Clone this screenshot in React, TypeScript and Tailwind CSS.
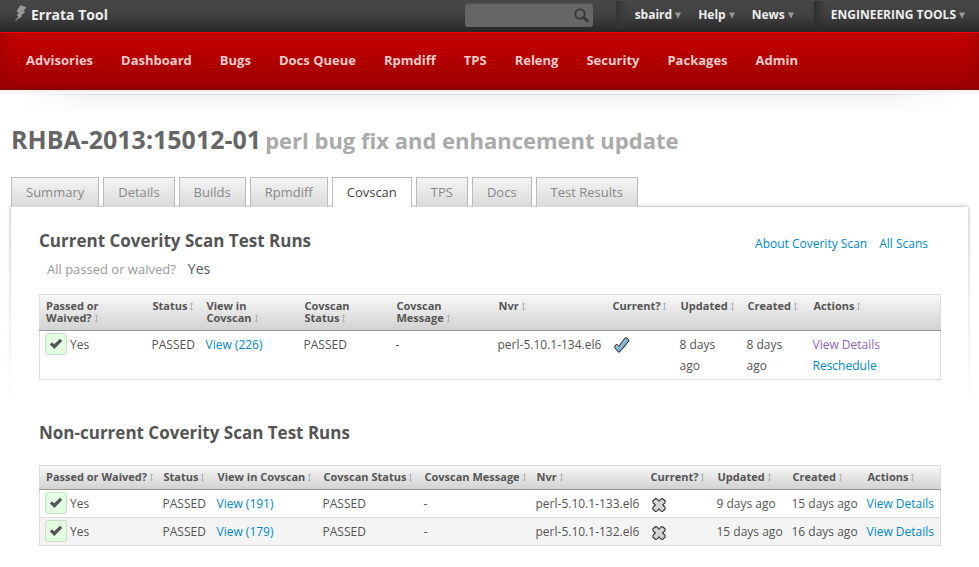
import type { ReactNode } from "react";

const navItems = ["Advisories", "Dashboard", "Bugs", "Docs Queue", "Rpmdiff", "TPS", "Releng", "Security", "Packages", "Admin"];
const tabs = ["Summary", "Details", "Builds", "Rpmdiff", "Covscan", "TPS", "Docs", "Test Results"];

function BoltIcon() {
  return (
    <svg width="13" height="17" viewBox="0 0 13 17" className="-mt-1 shrink-0" aria-hidden="true">
      <path d="M6.5 0 L12.4 2.2 L9.4 6 L11.4 6.9 L7.2 10.2 L8.6 11 L0.4 16.6 L4.4 11.4 L2.6 10.6 L4.8 7.6 L2.4 6.6 Z" fill="#999" />
    </svg>
  );
}

function SearchIcon() {
  return (
    <svg width="15" height="15" viewBox="0 0 15 15" aria-hidden="true">
      <circle cx="6" cy="6" r="4.7" fill="none" stroke="#363636" strokeWidth="1.8" />
      <path d="M9.5 9.5 L13.2 12.8" stroke="#363636" strokeWidth="2.6" strokeLinecap="round" />
    </svg>
  );
}

function SortIcon() {
  return (
    <svg width="5" height="9" viewBox="0 0 5 9" className="ml-[2px] inline-block align-[-1px]" aria-hidden="true">
      <path d="M2.5 1 V8 M1 2.5 L2.5 0.8 L4 2.5 M1 6.5 L2.5 8.2 L4 6.5" fill="none" stroke="#b4b4b4" />
    </svg>
  );
}

function PassedBadge() {
  return (
    <span className="-mt-px inline-flex h-[22px] w-[22px] shrink-0 items-center justify-center rounded-[3px] border border-[#ccdccc] bg-[#e2ffe2]">
      <svg width="14" height="12" viewBox="0 0 14 12" aria-hidden="true">
        <path d="M0.8 6.4 L3 4.2 L5.2 6.2 L11 0.8 L13.2 3 L5.4 11 Z" fill="#555" />
      </svg>
    </span>
  );
}

function CurrentIcon() {
  return (
    <svg width="16" height="16" viewBox="0 0 16 16" className="ml-[2px] mt-[3px] block" role="img" aria-label="Current">
      <defs>
        <linearGradient id="tick" x1="0" y1="0" x2="1" y2="1">
          <stop offset="0" stopColor="#d4e8f5" />
          <stop offset="1" stopColor="#3f83b5" />
        </linearGradient>
      </defs>
      <path d="M0.7 10.6 L1.2 8.6 L2.6 7 L4.8 9.4 L10.8 1.2 L12.2 0.7 L14.8 2.6 V4 L6.8 13.8 L4.6 15.3 Z" fill="url(#tick)" stroke="#1a1a1a" strokeLinejoin="round" />
    </svg>
  );
}

function NotCurrentIcon() {
  return (
    <svg width="14" height="14" viewBox="0 0 14 14" className="ml-[2px] mt-[5px] block" role="img" aria-label="Not current">
      <path
        d="M3.4 0.6 L5.2 1 L7 3.1 L8.8 1 L10.6 0.6 L13.2 3 L12.9 4.8 L10.6 7 L12.9 9.2 L13.2 11 L10.6 13.4 L8.8 13 L7 10.9 L5.2 13 L3.4 13.4 L0.8 11 L1.1 9.2 L3.4 7 L1.1 4.8 L0.8 3 Z"
        fill="#d4d4d4"
        stroke="#333"
        strokeWidth="1.1"
        strokeLinejoin="round"
      />
    </svg>
  );
}

function MenuButton({ children }: { children: ReactNode }) {
  return (
    <button type="button" className="flex items-center gap-[3px] whitespace-nowrap text-xs font-bold text-[#eee]">
      {children}
      <svg width="6" height="7" viewBox="0 0 6 7" aria-hidden="true">
        <path d="M0 0.5 H6 L3 6.5 Z" fill="#999" />
      </svg>
    </button>
  );
}

function TextLink({ children, visited = false }: { children: ReactNode; visited?: boolean }) {
  return (
    <a href="#" className={visited ? "text-[#8f63c9]" : "text-[#0088cc]"}>
      {children}
    </a>
  );
}

type Run = {
  view: string;
  nvr: string;
  current: boolean;
  updated: string;
  created: string;
  actions: ReactNode;
};

const headers = [
  ["Passed or", "Waived?"],
  ["Status"],
  ["View in", "Covscan"],
  ["Covscan", "Status"],
  ["Covscan", "Message"],
  ["Nvr"],
  ["Current?"],
  ["Updated"],
  ["Created"],
  ["Actions"],
];

const currentColumns = ["w-[107px]", "w-[54px]", "w-[98px]", "w-[92px]", "w-[102px]", "w-[114px]", "w-[68px]", "w-[67px]", "w-[66px]", "w-[133px]"];
const otherColumns = ["w-[118px]", "w-[54px]", "w-[106px]", "w-[101px]", "w-[112px]", "w-[114px]", "w-[67px]", "w-[75px]", "w-[75px]", "w-[79px]"];

const currentRuns: Run[] = [
  {
    view: "View (226)",
    nvr: "perl-5.10.1-134.el6",
    current: true,
    updated: "8 days ago",
    created: "8 days ago",
    actions: (
      <>
        <TextLink visited>View Details</TextLink>
        <br />
        <TextLink>Reschedule</TextLink>
      </>
    ),
  },
];

const otherRuns: Run[] = [
  { view: "View (191)", nvr: "perl-5.10.1-133.el6", current: false, updated: "9 days ago", created: "15 days ago", actions: <TextLink>View Details</TextLink> },
  { view: "View (179)", nvr: "perl-5.10.1-132.el6", current: false, updated: "15 days ago", created: "16 days ago", actions: <TextLink>View Details</TextLink> },
];

function RunsTable({ runs, columns, stacked = false }: { runs: Run[]; columns: string[]; stacked?: boolean }) {
  const cell = "py-[3px] pl-[5px] whitespace-nowrap";
  const dateCell = stacked ? "py-[3px] pl-[5px] pr-[6px]" : cell;
  return (
    <table className="w-full table-fixed border-collapse border border-[#ddd] text-left">
      <colgroup>
        {columns.map((width, i) => (
          <col key={i} className={width} />
        ))}
      </colgroup>
      <thead>
        <tr className="border-b border-[#999] bg-linear-to-b from-[#f8f8f8] to-[#d2d2d2] align-top">
          {headers.map((lines) => (
            <th key={lines.join(" ")} scope="col" className="pt-[5px] pb-[6px] pl-[6px] text-[11px] leading-3 font-bold whitespace-nowrap text-[#555]">
              {stacked && lines.length > 1 ? (
                <>
                  {lines[0]}
                  <br />
                  {lines[1]}
                </>
              ) : (
                lines.join(" ")
              )}
              <SortIcon />
            </th>
          ))}
        </tr>
      </thead>
      <tbody>
        {runs.map((run) => (
          <tr key={run.nvr} className="border-b border-[#ddd] align-top text-xs leading-[21px] text-[#555] even:bg-[#f4f4f4]">
            <td className={cell}>
              <span className="flex items-start gap-[3px]">
                <PassedBadge />
                Yes
              </span>
            </td>
            <td className={cell}>PASSED</td>
            <td className={cell}>
              <TextLink>{run.view}</TextLink>
            </td>
            <td className={cell}>PASSED</td>
            <td className={cell}>-</td>
            <td className={cell}>{run.nvr}</td>
            <td className={cell}>{run.current ? <CurrentIcon /> : <NotCurrentIcon />}</td>
            <td className={dateCell}>{run.updated}</td>
            <td className={dateCell}>{run.created}</td>
            <td className={cell}>{run.actions}</td>
          </tr>
        ))}
      </tbody>
    </table>
  );
}

export default function App() {
  return (
    <div className="min-h-screen bg-white font-['Open_Sans','Noto_Sans',sans-serif] text-[#555]">
      <header>
        <div className="flex h-8 items-center bg-linear-to-b from-[#484848] via-[#404040] to-[#272727] pr-[14px] pb-[2px] pl-[14px]">
          <a href="#" className="flex items-center gap-1 text-sm font-bold whitespace-nowrap text-[#eee]">
            <BoltIcon />
            Errata Tool
          </a>
          <div className="ml-auto flex h-full items-center">
            <form role="search" className="mr-[23px] flex h-6 w-32 items-center rounded-[3px] bg-[#666] pr-1 shadow-[inset_0_1px_1px_#505050]">
              <input type="search" aria-label="Search" className="w-full min-w-0 bg-transparent px-2 text-xs text-white outline-none" />
              <button type="submit" aria-label="Search">
                <SearchIcon />
              </button>
            </form>
            <div className="flex h-7 items-center gap-[17px] bg-linear-to-r from-[#343434] to-transparent to-[6%] pr-[20px] pl-[19px]">
              <MenuButton>sbaird</MenuButton>
              <MenuButton>Help</MenuButton>
              <MenuButton>News</MenuButton>
            </div>
            <div className="flex h-7 items-center bg-linear-to-r from-[#2e2e2e] to-transparent to-[8%] pl-[17px]">
              <MenuButton>ENGINEERING TOOLS</MenuButton>
            </div>
          </div>
        </div>
        <nav
          aria-label="Main"
          className="flex h-[58px] items-center gap-7 border-t border-b-2 border-t-[#f60000] border-b-[#8a0000] bg-linear-to-b from-[#c80000] to-[#9c0000] px-[26px] shadow-[inset_12px_0_20px_-12px_#980000,inset_-12px_0_20px_-12px_#980000]"
        >
          {navItems.map((item) => (
            <a key={item} href="#" className="text-[13px] font-bold whitespace-nowrap text-[#f5cccc]">
              {item}
            </a>
          ))}
        </nav>
        <div className="h-1 bg-linear-to-b from-[#eee] to-[#fafafa]" />
        <div className="h-5 border-t border-[#ddd] bg-linear-to-b from-[#f4f4f4] to-white mask-[linear-gradient(to_right,transparent_2%,black_9%,black_91%,transparent_98%)]" />
      </header>

      <main className="px-[11px] pt-2">
        <h1 className="flex items-baseline gap-1 text-[25px] leading-[34px] font-bold whitespace-nowrap text-[#666]">
          RHBA-2013:15012-01
          <small className="text-[22px] font-bold text-[#aaa]">perl bug fix and enhancement update</small>
        </h1>

        <nav aria-label="Advisory sections" className="relative z-10 mt-5 flex gap-1">
          {tabs.map((tab) => (
            <a
              key={tab}
              href="#"
              aria-current={tab === "Covscan" ? "page" : undefined}
              className={
                tab === "Covscan"
                  ? "h-[30px] border border-b-0 border-[#bbb] bg-white px-[14px] text-[13px] leading-7 whitespace-nowrap text-[#444]"
                  : "h-[30px] border border-b-0 border-[#bbb] bg-linear-to-b from-[#f4f4f4] to-[#dadada] px-[14px] text-[13px] leading-7 whitespace-nowrap text-[#888]"
              }
            >
              {tab}
            </a>
          ))}
        </nav>

        <div className="relative">
          <div className="absolute -inset-2 mask-[linear-gradient(to_bottom,black,transparent_55%)] p-2" aria-hidden="true">
            <div className="h-full shadow-[0_0_4px_#999]" />
          </div>
          <section className="relative bg-white px-7 pb-4">
            <div className="flex items-center justify-between pt-[22px] pr-3">
              <h2 className="text-[17px] leading-6 font-bold">Current Coverity Scan Test Runs</h2>
              <div className="mt-[6px] flex gap-3 text-xs leading-4">
                <TextLink>About Coverity Scan</TextLink>
                <TextLink>All Scans</TextLink>
              </div>
            </div>
            <dl className="mt-[6px] mb-[15px] flex items-center gap-3 px-2 leading-5">
              <dt className="text-[13px] text-[#999]">All passed or waived?</dt>
              <dd className="text-sm">Yes</dd>
            </dl>
            <RunsTable runs={currentRuns} columns={currentColumns} stacked />
            <h2 className="mt-[41px] mb-5 text-[17px] leading-6 font-bold">Non-current Coverity Scan Test Runs</h2>
            <RunsTable runs={otherRuns} columns={otherColumns} />
          </section>
        </div>
      </main>
    </div>
  );
}
